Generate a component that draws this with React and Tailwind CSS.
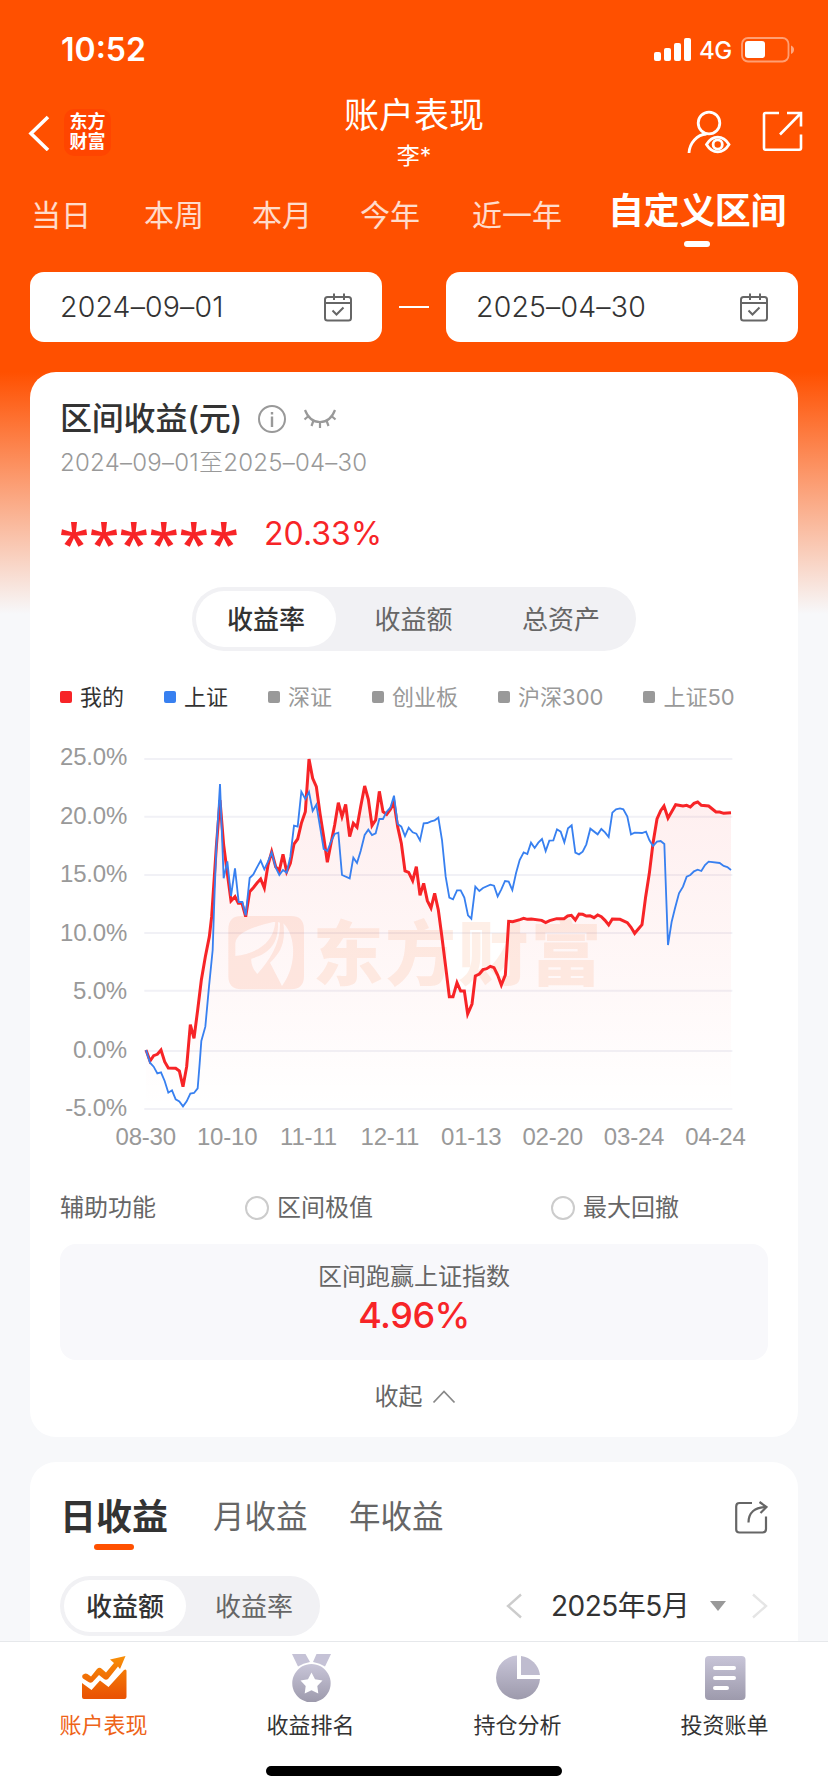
import React from "react";

const RED =
  "318,1170 330,1203 341,1187 352,1183 363,1170 374,1205 385,1224 407,1225 418,1233 429,1280 440,1220 451,1094 462,1135 473,1050 484,960 496,890 508,830 515,770 519,710 529,560 540,420 551,555 562,640 573,723 585,710 595,730 606,730 617,770 629,695 640,683 651,669 662,657 673,684 684,615 695,575 707,620 718,632 729,583 740,635 751,610 762,552 773,537 784,490 796,455 807,297 818,355 829,380 840,460 851,530 862,607 873,550 884,495 895,428 906,470 917,433 929,530 940,490 951,502 962,440 974,378 985,418 996,497 1007,480 1018,394 1029,455 1040,463 1051,448 1062,428 1073,500 1084,550 1095,633 1106,637 1118,662 1129,620 1140,706 1151,670 1162,722 1173,744 1184,700 1195,750 1205,825 1217,920 1228,1010 1239,1010 1251,968 1262,993 1273,993 1283,1062 1296,1032 1306,948 1318,942 1329,929 1340,926 1351,919 1362,923 1373,945 1384,975 1396,945 1406,784 1418,785 1440,779 1451,775 1462,778 1474,777 1505,781 1517,788 1529,782 1550,776 1572,776 1583,768 1594,766 1606,780 1617,762 1628,763 1639,768 1650,767 1662,773 1673,765 1684,770 1695,781 1706,795 1717,777 1740,778 1762,788 1773,802 1784,820 1795,807 1806,794 1817,710 1828,640 1839,550 1851,477 1862,452 1872,438 1884,474 1895,455 1907,434 1929,438 1940,436 1951,441 1962,430 1973,426 1984,436 2006,438 2017,447 2028,456 2039,456 2051,460 2073,458";

const BLUE =
  "318,1170 330,1208 341,1220 352,1240 363,1237 374,1263 385,1298 396,1291 407,1318 418,1324 429,1339 440,1324 451,1301 462,1299 473,1285 479,1210 484,1143 496,1100 507,980 518,870 523,720 529,560 540,372 551,655 562,604 573,708 585,625 596,726 607,726 617,766 629,654 640,643 651,622 662,602 673,628 684,605 695,577 707,622 718,645 729,630 740,638 751,590 762,497 773,500 784,395 796,417 807,396 818,453 829,434 840,500 851,567 862,573 873,545 884,522 895,518 906,645 929,655 940,593 951,609 962,573 974,525 985,509 996,525 1007,520 1018,477 1029,477 1040,455 1051,443 1062,407 1073,492 1084,500 1095,528 1106,503 1118,517 1129,521 1140,541 1151,490 1162,489 1173,484 1184,481 1195,473 1206,540 1217,650 1228,713 1239,718 1251,691 1262,691 1273,713 1284,766 1294,776 1306,680 1318,693 1329,684 1351,674 1362,677 1373,709 1384,688 1395,663 1406,665 1417,690 1428,640 1439,600 1451,577 1462,582 1473,548 1484,564 1495,548 1506,537 1517,573 1528,542 1540,541 1551,508 1562,515 1573,547 1584,505 1595,496 1606,578 1617,583 1628,575 1639,553 1651,506 1673,523 1684,507 1695,517 1706,531 1717,458 1728,448 1740,445 1750,448 1762,470 1773,523 1784,518 1806,519 1818,515 1828,540 1839,558 1851,545 1862,543 1873,552 1879,720 1884,855 1895,785 1905,745 1917,700 1929,680 1940,650 1951,645 1962,634 1973,629 1984,633 1995,615 2006,605 2039,609 2051,618 2062,621 2073,630";

const GRID = [297, 470, 645, 819, 992, 1173, 1347];

function StatusBar() {
  return (
    <div className="flex h-[88px] items-center pt-[11px] pl-[61px] pr-[33px] text-white">
      <span className="text-[32px] font-semibold leading-none">10:52</span>
      <div className="ml-auto flex items-center">
        <svg width="37" height="23" viewBox="0 0 37 23" fill="currentColor">
          <rect x="0" y="14" width="7" height="9" rx="2" />
          <rect x="10" y="10" width="7" height="13" rx="2" />
          <rect x="20" y="5" width="7" height="18" rx="2" />
          <rect x="30" y="0" width="7" height="23" rx="2" />
        </svg>
        <span className="ml-[8px] mt-[2px] w-[34px] text-[24px] font-medium leading-none tracking-[-0.5px]">4G</span>
        <svg className="ml-[8px]" width="54" height="26" viewBox="0 0 54 26" fill="none">
          <rect x="1" y="1" width="46.500" height="23.500" rx="6" stroke="white" strokeOpacity=".45" strokeWidth="1.800" />
          <rect x="4" y="4" width="20" height="17" rx="3" fill="white" />
          <path d="M50 8.500c2 .8 3 2.300 3 4.200s-1 3.400-3 4.200z" fill="white" fillOpacity=".5" />
        </svg>
      </div>
    </div>
  );
}

function NavBar() {
  return (
    <div className="grid h-[92px] grid-cols-3 text-white">
      <div className="flex items-center pl-[28px]">
        <svg width="22" height="36" viewBox="0 0 22 36" fill="none" stroke="white" strokeWidth="3.600" className="-mt-[3px]">
          <path d="M20 2 3 18.500 20 35" />
        </svg>
        <div className="-mt-[4px] ml-[14px] grid h-[47px] w-[47px] place-content-center rounded-[10px] bg-[#ff4500] text-center text-[18px] font-bold leading-[20px]">
          <span>东方</span>
          <span>财富</span>
        </div>
      </div>
      <div className="flex flex-col items-center pt-[9px]">
        <span className="text-[35px] leading-[36px]">账户表现</span>
        <span className="mt-[8px] text-[23px] leading-[30px]">李*</span>
      </div>
      <div className="flex items-start justify-end gap-[31px] pr-[25px] pt-[22px]">
        <svg width="44" height="44" viewBox="0 0 44 44" fill="none" stroke="white" strokeWidth="2.800">
          <circle cx="22" cy="13" r="10.800" />
          <path d="M2 43C2.500 33 10 24.500 19.500 24" />
          <path d="M19.500 34.500c3-5 6.500-7.300 11.200-7.300s8.200 2.300 11.300 7.300c-3.100 5-6.600 7.300-11.300 7.300s-8.200-2.300-11.200-7.300z" />
          <circle cx="30.700" cy="34.500" r="4.600" />
        </svg>
        <svg className="mt-[1px]" width="41" height="41" viewBox="0 0 41 41" fill="none" stroke="white" strokeWidth="2.600">
          <path d="M17 2H3.500Q2 2 2 3.500V37Q2 38.700 3.500 38.700H37.300Q39 38.700 39 37V23.500M25 2H39V15.500M38.500 2.500 18 23.500" />
        </svg>
      </div>
    </div>
  );
}

function CalendarIcon() {
  return (
    <svg width="28" height="29" viewBox="0 0 28 29" fill="none" stroke="#666" strokeWidth="2">
      <rect x="1" y="4" width="26" height="23.500" rx="2.500" />
      <path d="M1 10H27M10 0.500V7M20 0.500V7M8.500 17.500 12.500 21.500 19.500 14.500" />
    </svg>
  );
}

function DateBox({ value }) {
  return (
    <div className="flex h-[70px] w-[352px] items-center justify-between rounded-[14px] bg-white pl-[30px] pr-[30px]">
      <span className="text-[28.500px] font-light tracking-[0.150px] text-[#333]">{value}</span>
      <CalendarIcon />
    </div>
  );
}

function Legend() {
  const items = [
    ["我的", "bg-[#f72427]", "text-[#333]"],
    ["上证", "bg-[#3880f0]", "text-[#333]"],
    ["深证", "bg-[#999]", "text-[#999]"],
    ["创业板", "bg-[#999]", "text-[#999]"],
    ["沪深300", "bg-[#999]", "text-[#999]"],
    ["上证50", "bg-[#999]", "text-[#999]"],
  ];
  return (
    <div className="mt-[31px] flex h-[30px] items-center gap-[40px]">
      {items.map(([name, dot, color]) => (
        <div key={name} className="flex items-center gap-[8px] whitespace-nowrap">
          <span className={"h-[12px] w-[12px] rounded-[2px] " + dot} />
          <span className={"text-[22px] leading-[30px] " + color}>{name}</span>
        </div>
      ))}
    </div>
  );
}

function Chart() {
  return (
    <div className="mt-[16px] font-['Liberation_Sans',sans-serif] text-[24px] text-[#999]">
      <div className="flex">
        <div className="flex w-[67px] flex-col text-right">
          {["25.0%", "20.0%", "15.0%", "10.0%", "5.0%", "0.0%", "-5.0%"].map((t) => (
            <span key={t} className="h-[58.500px] leading-[58.500px] tracking-[-0.200px]">{t}</span>
          ))}
        </div>
        <svg className="ml-[17px]" width="592" height="410" viewBox="312 204 1776 1230" fill="none">
          <defs>
            <linearGradient id="area" x1="0" y1="297" x2="0" y2="1347" gradientUnits="userSpaceOnUse">
              <stop offset="0" stopColor="#f72427" stopOpacity=".08" />
              <stop offset=".6" stopColor="#f72427" stopOpacity=".035" />
              <stop offset="1" stopColor="#f72427" stopOpacity="0" />
            </linearGradient>
          </defs>
          {GRID.map((y) => (
            <path key={y} d={"M313 " + y + "H2077"} stroke="#f1f1f6" strokeWidth="6" />
          ))}
          <polygon points={"318,1347 " + RED + " 2073,1347"} fill="url(#area)" />
          <g fill="#f9622c" fillOpacity=".12">
            <path
              fillRule="evenodd"
              d="M605 768H752Q792 768 792 808V948Q792 988 752 988H605Q565 988 565 948V808Q565 768 605 768ZM700 786C640 800 588 818 586 850V888C650 880 700 850 706 786ZM714 786C716 850 690 880 634 896C632 910 640 930 652 942C690 900 722 850 720 788ZM730 790C738 850 720 880 690 908L726 978C770 920 770 830 730 790Z"
            />
            <text x="818" y="960" fontSize="212" fontWeight="900" letterSpacing="6" fill="#f97a3c" fontFamily="'Noto Sans CJK SC', sans-serif">东方财富</text>
          </g>
          <polyline points={RED} stroke="#f72427" strokeWidth="9" />
          <polyline points={BLUE} stroke="#3880f0" strokeWidth="5.500" />
        </svg>
      </div>
      <div className="-mt-[15px] ml-[45px] flex">
        {["08-30", "10-10", "11-11", "12-11", "01-13", "02-20", "03-24", "04-24"].map((t) => (
          <span key={t} className="w-[81.400px] shrink-0 text-center leading-[28px] tracking-[-0.200px]">{t}</span>
        ))}
      </div>
    </div>
  );
}

function Radio({ children, className = "" }) {
  return (
    <div className={"flex items-center gap-[8px] " + className}>
      <span className="h-[24px] w-[24px] rounded-full border-2 border-[#ccc]" />
      <span>{children}</span>
    </div>
  );
}

function ReturnsCard() {
  return (
    <section className="mx-[30px] mt-[30px] h-[1065px] rounded-[26px] bg-white px-[30px] pt-[24px]">
      <div className="flex h-[46px] items-center">
        <span className="text-[32px] font-medium tracking-[-0.200px] text-[#333]">区间收益(元)</span>
        <svg className="ml-[16px]" width="28" height="28" viewBox="0 0 28 28" fill="none" stroke="#999" strokeWidth="2">
          <circle cx="14" cy="14" r="13" />
          <path d="M14 11.500V22M14 7V9.500" strokeWidth="2.400" />
        </svg>
        <svg className="ml-[17px]" width="34" height="20" viewBox="0 0 34 20" fill="none" stroke="#999" strokeWidth="2.200">
          <path d="M2 1C5 9 10.500 13 17 13S29 9 32 1M5.500 7 1.500 10.500M10.500 11.500 8.500 17M17 13V19M23.500 11.500 25.500 17M28.500 7 32.500 10.500" />
        </svg>
      </div>
      <div className="mt-[4px] h-[34px] text-[24px] font-light leading-[34px] tracking-[0.240px] text-[#999]">2024–09–01至2025–04–30</div>
      <div className="mt-[29px] flex h-[50px] items-center text-[#f72427]">
        <span className="-ml-[1px] w-[205px] pt-[16px] font-['Open_Sans',sans-serif] text-[55px] font-semibold leading-[50px] tracking-[-0.200px]">******</span>
        <span className="text-[32px] leading-[50px]">20.33%</span>
      </div>
      <div className="mx-auto mt-[28px] flex h-[64px] w-[444px] items-center rounded-full bg-[#f1f1f4] p-[4px] text-[26px] text-[#666]">
        <span className="flex h-[56px] w-[140px] shrink-0 items-center justify-center rounded-full bg-white font-medium text-[#333]">收益率</span>
        <span className="w-[155px] shrink-0 text-center">收益额</span>
        <span className="w-[140px] shrink-0 text-center">总资产</span>
      </div>
      <Legend />
      <Chart />
      <div className="mt-[41px] flex h-[32px] items-center whitespace-nowrap text-[24px] text-[#666]">
        <span className="w-[185px]">辅助功能</span>
        <Radio className="w-[306px]">区间极值</Radio>
        <Radio>最大回撤</Radio>
      </div>
      <div className="mt-[20px] flex h-[116px] flex-col items-center rounded-[16px] bg-[#f8f8fb] pt-[17px]">
        <span className="text-[24px] leading-[32px] text-[#666]">区间跑赢上证指数</span>
        <span className="mt-[2px] text-[36px] font-medium leading-[40px] tracking-[-0.500px] text-[#f72427]">4.96%</span>
      </div>
      <div className="mt-[21px] flex h-[32px] items-center justify-center gap-[9px] pl-[2px] text-[24px] text-[#666]">
        收起
        <svg width="24" height="14" viewBox="0 0 24 14" fill="none" stroke="#888" strokeWidth="1.800">
          <path d="M1.500 12.500 12 1.500 22.500 12.500" />
        </svg>
      </div>
    </section>
  );
}

function DailyCard() {
  return (
    <section className="mx-[30px] mt-[25px] h-[179px] rounded-t-[26px] bg-white px-[30px] pt-[30px]">
      <div className="flex h-[50px] items-center text-[31.500px] text-[#666]">
        <div className="relative flex w-[153px] items-center text-[36px] font-bold text-[#333]">
          日收益
          <span className="absolute -bottom-[6px] left-[34px] h-[6px] w-[40px] rounded-full bg-[#ff5000]" />
        </div>
        <span className="w-[136px]">月收益</span>
        <span>年收益</span>
        <svg className="ml-auto" width="33" height="33" viewBox="0 0 33 33" fill="none" stroke="#666" strokeWidth="2.200">
          <path d="M17 2H4.500Q1.200 2 1.200 5.500V28.500Q1.200 31.500 4.500 31.500H27.500Q31 31.500 31 28V15.500M13.500 21.500C13.500 11.500 20 6 31 6M24.500 1 31.500 6 25.500 12" />
        </svg>
      </div>
      <div className="mt-[34px] flex h-[60px] items-center">
        <div className="flex h-[60px] w-[260px] items-center rounded-full bg-[#f1f1f4] p-[4px] text-[26px] text-[#666]">
          <span className="flex h-[52px] w-[122px] shrink-0 items-center justify-center rounded-full bg-white font-medium text-[#333]">收益额</span>
          <span className="w-[130px] shrink-0 pl-[6px] text-center">收益率</span>
        </div>
        <svg className="ml-[186px]" width="16" height="26" viewBox="0 0 16 26" fill="none" stroke="#ccc" strokeWidth="2.400">
          <path d="M15 1.500 2 13 15 24.500" />
        </svg>
        <span className="ml-[29px] w-[159px] whitespace-nowrap text-[28px] leading-none tracking-[-0.500px] text-[#333]">2025年5月</span>
        <svg width="16" height="10" viewBox="0 0 16 10" fill="#999">
          <path d="M0 0H16L8 10Z" />
        </svg>
        <svg className="ml-auto" width="16" height="26" viewBox="0 0 16 26" fill="none" stroke="#e5e5e5" strokeWidth="2.400">
          <path d="M1 1.500 14 13 1 24.500" />
        </svg>
      </div>
    </section>
  );
}

function TabBar() {
  return (
    <nav className="flex h-[151px] flex-col border-t border-[#e6e8eb] bg-white">
      <svg width="0" height="0" className="absolute">
        <defs>
          <linearGradient id="grey" x1="0" y1="0" x2="0" y2="1">
            <stop offset="0" stopColor="#c8c5d8" />
            <stop offset="1" stopColor="#9d9aac" />
          </linearGradient>
          <linearGradient id="orange" x1="0" y1="0" x2="0" y2="44" gradientUnits="userSpaceOnUse">
            <stop offset="0" stopColor="#fa9508" />
            <stop offset="1" stopColor="#ea5404" />
          </linearGradient>
        </defs>
      </svg>
      <div className="grid grid-cols-4 pt-[10px] text-[22px] leading-[30px] text-[#333]">
        <div className="flex flex-col items-center text-[#ee6318]">
          <svg width="46" height="50" viewBox="0 0 46 50" fill="url(#orange)">
            <path d="M1 31 10.500 38 19 28.500 27.500 35 43 18Q45.500 16.500 45.500 19V45Q45.500 47 43.500 47H3Q1 47 1 45Z" />
            <path d="M1.500 23Q4 20.500 6.500 22L10 24.500 16 17Q18.500 14.500 21 17L25 20.500 33 11 29 7.500 44.500 4 39 17 37 14.500 27 27Q25 28.500 23 27L18 23 11.500 30Q9.500 31.500 7.500 30L2 26.500Q.5 25 1.500 23Z" />
          </svg>
          <span className="mt-[8px]">账户表现</span>
        </div>
        <div className="flex flex-col items-center">
          <svg width="46" height="50" viewBox="0 0 46 50" fill="url(#grey)">
            <path d="M4 2H17.500L22 10Q15 11 10 14.500ZM28.500 2H43L37 14.500Q32 11 25 10Z" fill="#c5c2d6" />
            <path
              fillRule="evenodd"
              d="M23.500 12A19.200 19.200 0 1 1 23.400 12ZM23.500 20.500 20 27.200 12.500 28.500 17.700 34 16.700 41.500 23.500 38.300 30.300 41.500 29.300 34 34.500 28.500 27 27.200Z"
            />
          </svg>
          <span className="mt-[8px]">收益排名</span>
        </div>
        <div className="flex flex-col items-center">
          <svg width="46" height="50" viewBox="0 0 46 50" fill="url(#grey)">
            <path d="M22 3.500V27H45A22 22 0 1 1 22 3.500Z" />
            <path d="M26 4A22 22 0 0 1 45 23H26Z" fill="#bfbccf" />
          </svg>
          <span className="mt-[8px]">持仓分析</span>
        </div>
        <div className="flex flex-col items-center">
          <svg width="46" height="50" viewBox="0 0 46 50" fill="none">
            <rect x="3" y="4" width="40.500" height="44" rx="4" fill="url(#grey)" />
            <path d="M13 16H32M13 26H32M13 36H25" stroke="white" strokeWidth="4" strokeLinecap="round" />
          </svg>
          <span className="mt-[8px]">投资账单</span>
        </div>
      </div>
      <div className="mx-auto mt-[26px] h-[10px] w-[296px] rounded-full bg-black" />
    </nav>
  );
}

export default function App() {
  return (
    <main className="h-[1792px] w-[828px] overflow-hidden bg-[#f7f8fa] bg-[linear-gradient(180deg,#ff5000_0px,#ff5000_372px,#f7f8fa_614px)] font-['Inter','Noto_Sans_CJK_SC',sans-serif]">
      <StatusBar />
      <NavBar />
      <div className="flex h-[92px] items-start whitespace-nowrap pl-[31px] text-[30px] leading-[36px] text-white/80">
        <span className="mt-[17px] w-[113px]">当日</span>
        <span className="mt-[17px] w-[108px]">本周</span>
        <span className="mt-[17px] w-[108px]">本月</span>
        <span className="mt-[17px] w-[112px]">今年</span>
        <span className="mt-[17px] w-[136px]">近一年</span>
        <div className="mt-[11px] flex flex-col items-center">
          <span className="text-[36px] font-bold leading-[40px] tracking-[-0.400px] text-white">自定义区间</span>
          <span className="mt-[10px] h-[6px] w-[26px] rounded-[3px] bg-white" />
        </div>
      </div>
      <div className="flex items-center justify-between px-[30px]">
        <DateBox value="2024–09–01" />
        <span className="h-[2px] w-[30px] bg-white" />
        <DateBox value="2025–04–30" />
      </div>
      <ReturnsCard />
      <DailyCard />
      <TabBar />
    </main>
  );
}
